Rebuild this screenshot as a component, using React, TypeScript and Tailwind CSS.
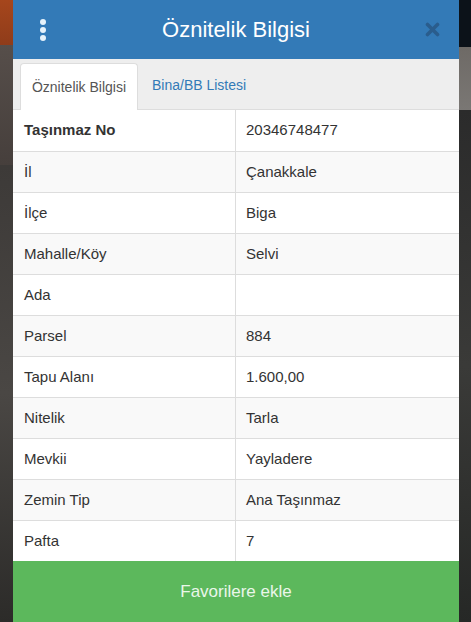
import { Fragment } from 'react'

const rows: Array<[string, string]> = [
  ['Taşınmaz No', '20346748477'],
  ['İl', 'Çanakkale'],
  ['İlçe', 'Biga'],
  ['Mahalle/Köy', 'Selvi'],
  ['Ada', ''],
  ['Parsel', '884'],
  ['Tapu Alanı', '1.600,00'],
  ['Nitelik', 'Tarla'],
  ['Mevkii', 'Yayladere'],
  ['Zemin Tip', 'Ana Taşınmaz'],
  ['Pafta', '7'],
]

function KebabIcon() {
  return (
    <svg width="8" height="24" viewBox="0 0 8 24" aria-hidden="true">
      <circle cx="4" cy="4" r="3" fill="#e6f2fb" />
      <circle cx="4" cy="12" r="3" fill="#e6f2fb" />
      <circle cx="4" cy="20" r="3" fill="#e6f2fb" />
    </svg>
  )
}

function CloseIcon() {
  return (
    <svg width="15" height="15" viewBox="0 0 15 15" aria-hidden="true">
      <path d="M2.5 2.5 L12.5 12.5 M12.5 2.5 L2.5 12.5" stroke="#2a5d8d" strokeWidth="3.6" strokeLinecap="round" />
    </svg>
  )
}

export default function App() {
  return (
    <div
      className="flex h-[622px] w-[471px] overflow-hidden bg-[#2f2e2c]"
      style={{ fontFamily: '"Liberation Sans", Arial, sans-serif' }}
    >
      {/* map peeking out on the left */}
      <div className="flex w-[13px] shrink-0 flex-col">
        <div className="h-[45px] bg-gradient-to-b from-[#a6461c] to-[#8f3c1a]" />
        <div className="h-[120px] bg-gradient-to-b from-[#564e4a] to-[#463f3c]" />
        <div className="flex-1 bg-gradient-to-b from-[#3d3a38] via-[#4a4744] to-[#2c2b29]" />
      </div>

      <div className="flex w-[446px] shrink-0 flex-col bg-white">
        <div className="flex h-[59px] items-center bg-[#337ab7] pl-[26px] pr-[19px]">
          <KebabIcon />
          <div className="flex-1 text-center text-[22px] text-white">Öznitelik Bilgisi</div>
          <CloseIcon />
        </div>

        <div className="flex h-[51px] items-end border-b border-[#ddd] bg-[#eeeeee] pl-[7px]">
          <div className="-mb-px flex h-[47px] w-[118px] items-center justify-center rounded-t border border-b-0 border-[#ddd] bg-white text-[14px] text-[#555]">
            Öznitelik Bilgisi
          </div>
          <div className="flex h-[47px] items-center pl-[14px] text-[14px] text-[#337ab7]">Bina/BB Listesi</div>
        </div>

        <div className="grid grid-cols-[223px_1fr]">
          {rows.map(([label, value], i) => (
            <Fragment key={label}>
              <div
                className={`flex h-[41px] items-center border-r border-[#ddd] pl-[11px] text-[15px] text-[#333] ${i > 0 ? 'border-t' : ''} ${i % 2 === 1 ? 'bg-[#f9f9f9]' : 'bg-white'} ${i === 0 ? 'font-bold' : ''}`}
              >
                {label}
              </div>
              <div
                className={`flex h-[41px] items-center border-[#ddd] pl-[10px] text-[15px] text-[#333] ${i > 0 ? 'border-t' : ''} ${i % 2 === 1 ? 'bg-[#f9f9f9]' : 'bg-white'}`}
              >
                {value}
              </div>
            </Fragment>
          ))}
        </div>

        <button
          type="button"
          className="flex flex-1 items-center justify-center bg-[#5cb85c] text-[17px] text-[#eaf6ea]"
        >
          Favorilere ekle
        </button>
      </div>

      {/* map peeking out on the right */}
      <div className="flex w-[12px] shrink-0 flex-col">
        <div className="h-[47px] bg-[#0c1219]" />
        <div className="h-[63px] bg-gradient-to-b from-[#6e6a66] to-[#7a7774]" />
        <div className="flex-1 bg-gradient-to-b from-[#2b2b2b] via-[#3a3a38] to-[#262826]" />
      </div>
    </div>
  )
}
